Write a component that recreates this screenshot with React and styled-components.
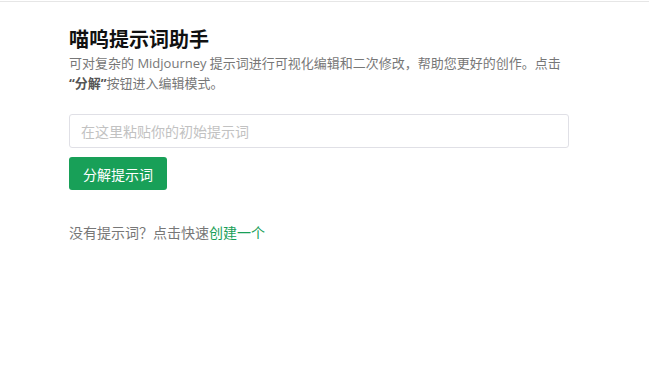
import styled, { createGlobalStyle } from "styled-components";

const GlobalStyle = createGlobalStyle`
  html, body {
    margin: 0;
    padding: 0;
    background: #fff;
  }
  body {
    font-family: "Open Sans", "Noto Sans CJK SC", sans-serif;
    color: #333;
  }
`;

const TopLine = styled.div`
  margin-top: 1px;
  height: 1px;
  background: #e6e6e6;
`;

const Main = styled.main`
  width: 500px;
  padding: 23px 0 0 69px;
`;

const Title = styled.h1`
  margin: 0;
  font-family: "Noto Sans CJK SC", sans-serif;
  font-size: 20px;
  line-height: 28px;
  font-weight: 700;
  color: #111;
`;

const Intro = styled.p`
  margin: 0;
  font-size: 13px;
  line-height: 20px;
  color: #777;
  strong {
    color: #555;
    font-weight: 700;
  }
`;

const Field = styled.input`
  display: block;
  box-sizing: border-box;
  width: 500px;
  height: 34px;
  margin-top: 21px;
  padding: 0 11px;
  border: 1px solid #e0e0e6;
  border-radius: 3px;
  font-family: "Noto Sans CJK SC", sans-serif;
  font-size: 14px;
  color: #333;
  outline: none;
  &::placeholder {
    color: #c2c2c2;
  }
`;

const Button = styled.button`
  display: block;
  height: 33px;
  margin-top: 9px;
  padding: 0 14px;
  border: none;
  border-radius: 3px;
  background: #18a058;
  color: #fff;
  font-family: "Noto Sans CJK SC", sans-serif;
  font-size: 14px;
  cursor: pointer;
`;

const Hint = styled.p`
  margin: 32px 0 0;
  font-family: "Noto Sans CJK SC", sans-serif;
  font-size: 14px;
  line-height: 20px;
  color: #777;
  a {
    color: #18a058;
    text-decoration: none;
  }
`;

export default function App() {
  return (
    <>
      <GlobalStyle />
      <TopLine />
      <Main>
        <Title>喵呜提示词助手</Title>
        <Intro>
          可对复杂的 Midjourney 提示词进行可视化编辑和二次修改，帮助您更好的创作。点击
          <br />
          <strong>“分解”</strong>按钮进入编辑模式。
        </Intro>
        <Field placeholder="在这里粘贴你的初始提示词" />
        <Button>分解提示词</Button>
        <Hint>
          没有提示词？点击快速<a href="#">创建一个</a>
        </Hint>
      </Main>
    </>
  );
}
